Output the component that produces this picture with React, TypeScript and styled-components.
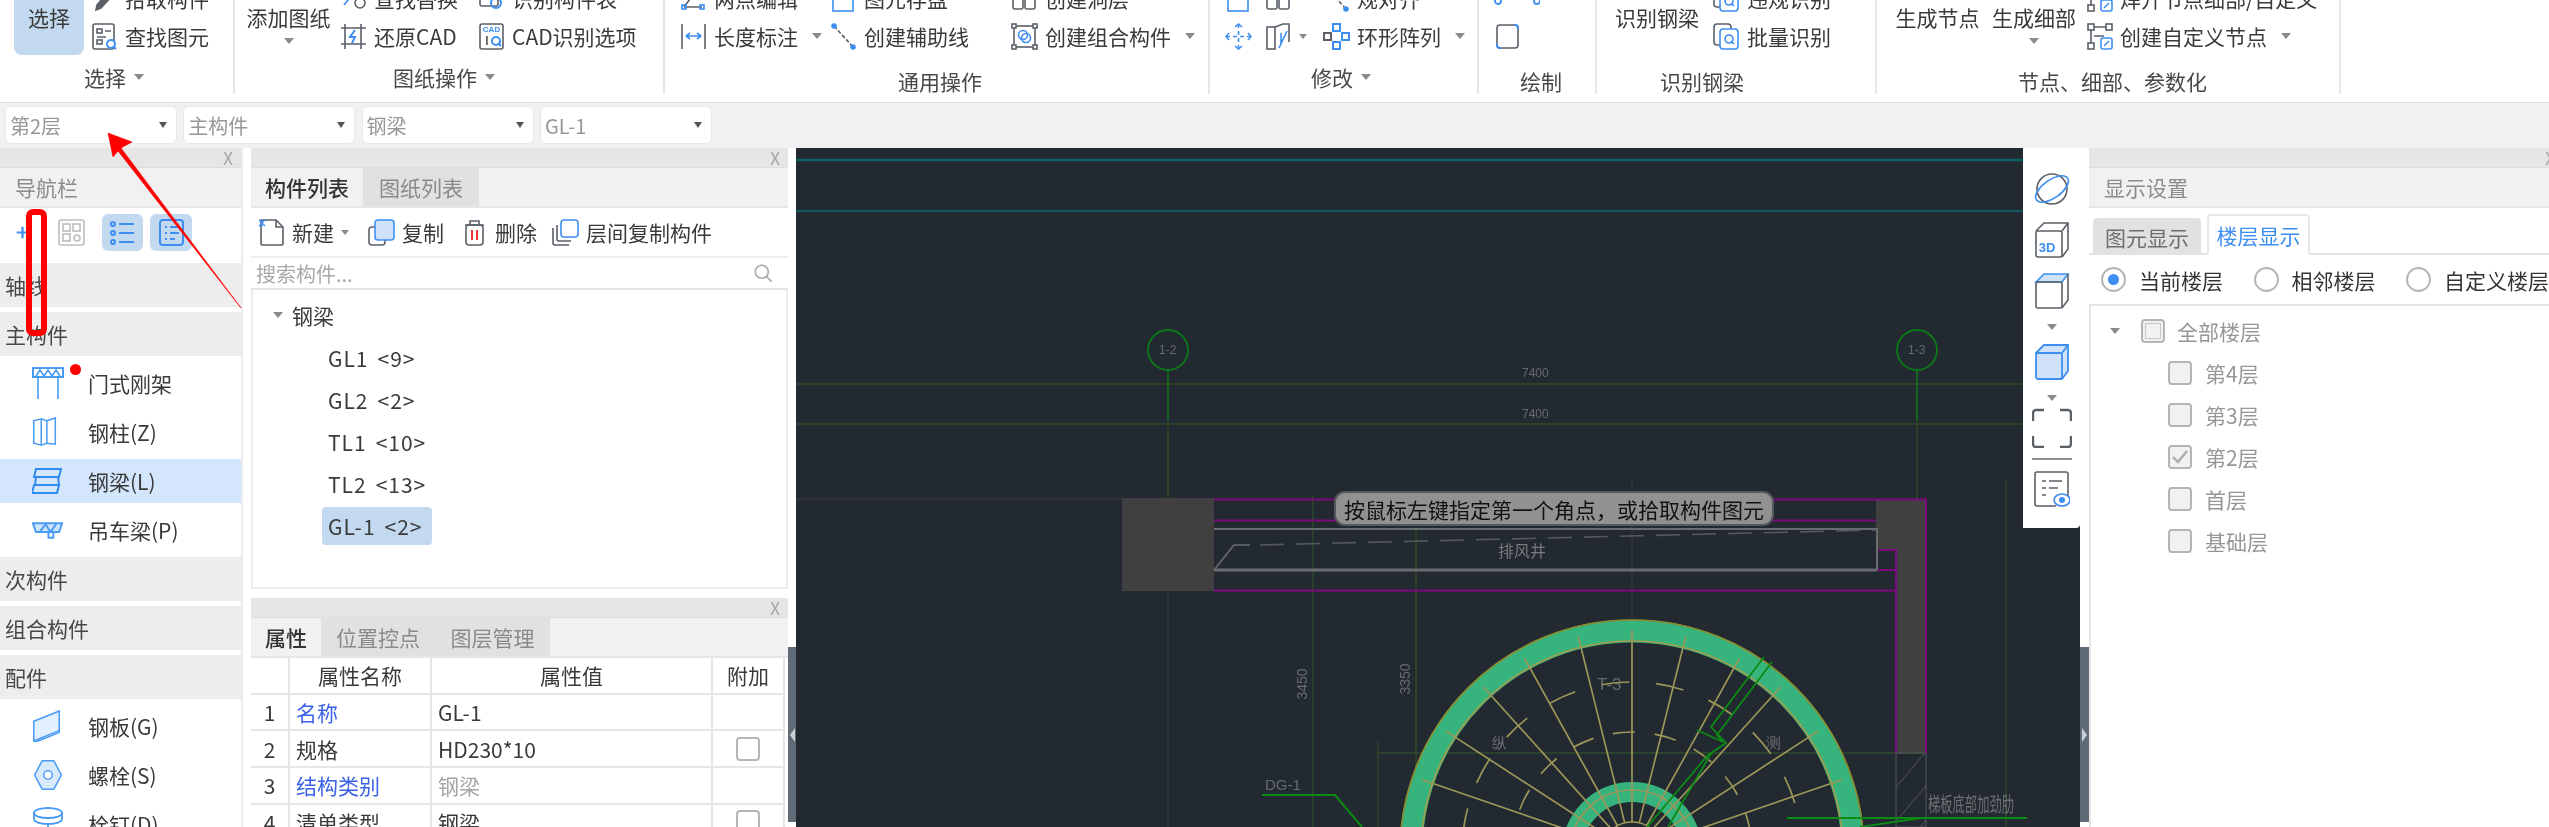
import React from "react";
import styled, { createGlobalStyle } from "styled-components";

const GRAY = "#5b6068";
const BLUE = "#3d8ef0";

const GlobalStyle = createGlobalStyle`
  html, body {
    margin: 0;
    padding: 0;
    background: #fff;
  }
  * {
    box-sizing: border-box;
  }
`;

const Page = styled.div`
  position: relative;
  width: 2549px;
  height: 827px;
  overflow: hidden;
  background: #fff;
  color: #3a3a3a;
  font-family: "Noto Sans CJK SC", "Liberation Sans", sans-serif;
  font-size: 21px;
  display: flex;
  flex-direction: column;
  filter: blur(0.45px);
`;

/* ribbon: the window is scrolled so its first row is cut off at the top */
const Ribbon = styled.div`
  flex: none;
  height: 103px;
  overflow: hidden;
  background: #fff;
  border-bottom: 1px solid #dcdcdc;
`;

const RibbonInner = styled.div`
  display: flex;
  margin-top: -21px;
`;

const Group = styled.div<{ $w: number; $pl: number }>`
  flex: none;
  width: ${(p) => p.$w}px;
  height: 115px;
  padding-left: ${(p) => p.$pl}px;
  border-right: 2px solid #e6e6e6;
  display: flex;
  flex-direction: column;
`;

const GroupBody = styled.div`
  height: 76px;
  display: flex;
`;

const GroupLabel = styled.div<{ $cx: number; $low?: boolean }>`
  margin-top: ${(p) => (p.$low ? 14 : 10)}px;
  height: 24px;
  line-height: 24px;
  font-size: 21px;
  color: #484848;
  white-space: nowrap;
  padding-left: ${(p) => p.$cx}px;
  display: flex;
  align-items: center;
  gap: 8px;
`;

const Caret = styled.span<{ $size?: number }>`
  display: inline-block;
  width: 0;
  height: 0;
  border-left: ${(p) => p.$size ?? 5}px solid transparent;
  border-right: ${(p) => p.$size ?? 5}px solid transparent;
  border-top: ${(p) => (p.$size ?? 5) + 1}px solid #8a8a8a;
`;

const BigButton = styled.div<{ $w: number; $active?: boolean; $mr: number }>`
  flex: none;
  width: ${(p) => p.$w}px;
  margin-right: ${(p) => p.$mr}px;
  padding-top: 26px;
  text-align: center;
  white-space: nowrap;
  line-height: 24px;
  border-radius: 0 0 8px 8px;
  background: ${(p) => (p.$active ? "#c2d9f0" : "transparent")};
  display: flex;
  flex-direction: column;
  align-items: center;
  gap: 9px;
`;

const ToolColumn = styled.div<{ $w: number }>`
  flex: none;
  width: ${(p) => p.$w}px;
  display: flex;
  flex-direction: column;
`;

const Tool = styled.div`
  height: 38px;
  display: flex;
  align-items: center;
  gap: 7px;
  white-space: nowrap;
`;

const ToolCaret = styled(Caret)`
  margin-left: 7px;
`;

const ComboBar = styled.div`
  flex: none;
  height: 45px;
  background: #f1f1f1;
  padding: 3px 0 0 5px;
  display: flex;
  gap: 6.3px;
`;

const Combo = styled.div`
  width: 172px;
  height: 38px;
  background: #fff;
  border-radius: 6px;
  border: 1px solid #e8e8e8;
  color: #979797;
  font-size: 20px;
  padding: 0 9px 0 4px;
  display: flex;
  align-items: center;
  justify-content: space-between;
`;

const ComboCaret = styled(Caret)`
  border-top-color: #555;
  border-left-width: 4px;
  border-right-width: 4px;
`;

const Workspace = styled.div`
  flex: 1;
  min-height: 0;
  display: flex;
`;

const CloseBar = styled.div`
  flex: none;
  height: 20px;
  background: #e6e6e6;
  border-bottom: 1px solid #ddd;
  display: flex;
  align-items: center;
  justify-content: flex-end;
  padding-right: 8px;
  color: #a5a5a5;
  font-size: 17px;
  line-height: 20px;
`;

const TitleBar = styled.div`
  flex: none;
  height: 40px;
  background: #f1f1f1;
  border-bottom: 2px solid #e6e6e6;
  padding-left: 15px;
  display: flex;
  align-items: center;
  color: #8c8c8c;
`;

const NavColumn = styled.aside`
  flex: none;
  width: 243px;
  margin-right: 8px;
  display: flex;
  flex-direction: column;
  border-right: 2px solid #ececec;
`;

const NavToolbar = styled.div`
  flex: none;
  height: 48px;
  padding: 6px 0 0 15px;
  display: flex;
  align-items: flex-start;
`;

const NavToolButton = styled.div<{ $active?: boolean; $w: number; $mr: number }>`
  width: ${(p) => p.$w}px;
  margin-right: ${(p) => p.$mr}px;
  height: 37px;
  border-radius: 6px;
  background: ${(p) => (p.$active ? "#c2d9f0" : "transparent")};
  display: flex;
  align-items: center;
  justify-content: center;
`;

const NavList = styled.div`
  padding-top: 7px;
  display: flex;
  flex-direction: column;
  gap: 5px;
`;

const NavSection = styled.div`
  height: 44px;
  padding-left: 5px;
  background: #ededed;
  display: flex;
  align-items: center;
  color: #484848;
`;

const NavItem = styled.div<{ $active?: boolean }>`
  position: relative;
  height: 44px;
  padding-left: 32px;
  display: flex;
  align-items: center;
  background: ${(p) => (p.$active ? "#d3e6fb" : "transparent")};
`;

const NavIcon = styled.span`
  width: 56px;
  flex: none;
  display: flex;
`;

const RedDot = styled.span`
  position: absolute;
  left: 70px;
  top: 3px;
  width: 11px;
  height: 11px;
  border-radius: 50%;
  background: #f00;
`;

const ListColumn = styled.section`
  flex: none;
  width: 537px;
  display: flex;
  flex-direction: column;
  gap: 9px;
`;

const ListPanel = styled.div`
  flex: none;
  height: 441px;
  display: flex;
  flex-direction: column;
`;

const TabStrip = styled.div`
  flex: none;
  height: 40px;
  background: #f1f1f1;
  border-bottom: 2px solid #e6e6e6;
  display: flex;
`;

const DarkTab = styled.div<{ $w: number; $active?: boolean }>`
  width: ${(p) => p.$w}px;
  display: flex;
  align-items: center;
  justify-content: center;
  background: ${(p) => (p.$active ? "#f1f1f1" : "#e1e1e1")};
  color: ${(p) => (p.$active ? "#333" : "#8a8a8a")};
  font-weight: ${(p) => (p.$active ? 500 : 400)};
`;

const ListToolbar = styled.div`
  flex: none;
  height: 48px;
  padding: 0 0 0 7px;
  display: flex;
  align-items: center;
`;

const ListTool = styled.div<{ $mr: number }>`
  display: flex;
  align-items: center;
  gap: 7px;
  margin-right: ${(p) => p.$mr}px;
  white-space: nowrap;
`;

const SearchRow = styled.div`
  flex: none;
  height: 34px;
  padding: 0 14px 0 5px;
  border-top: 2px solid #ececec;
  border-bottom: 2px solid #e4e4e4;
  display: flex;
  align-items: center;
  justify-content: space-between;
  color: #a8a8a8;
  font-size: 20px;
`;

const TreeBox = styled.div`
  flex: 1;
  padding: 7px 0 0 20px;
  border: 2px solid #ececec;
  border-top: none;
`;

const TreeRoot = styled.div`
  height: 36px;
  display: flex;
  align-items: center;
  gap: 9px;
`;

const TreeRows = styled.div`
  margin-top: 6px;
  display: flex;
  flex-direction: column;
  gap: 4px;
  align-items: flex-start;
`;

const TreeRow = styled.div<{ $active?: boolean }>`
  height: 38px;
  margin-left: 49px;
  padding: 0 6px;
  min-width: 110px;
  display: flex;
  align-items: center;
  gap: 9px;
  border-radius: 4px;
  letter-spacing: 1px;
  background: ${(p) => (p.$active ? "#c2d9f0" : "transparent")};
`;

const PropsPanel = styled.div`
  flex: 1;
  min-height: 0;
  display: flex;
  flex-direction: column;
  overflow: hidden;
`;

const PropGrid = styled.div`
  display: grid;
  grid-template-columns: 39px 142px 281px 72px;
  grid-auto-rows: 36.7px;
  width: 534px;
`;

const Cell = styled.div<{ $head?: boolean; $color?: string }>`
  border-right: 2px solid #e6e6e6;
  border-bottom: 2px solid #e6e6e6;
  display: flex;
  align-items: center;
  justify-content: ${(p) => (p.$head ? "center" : "flex-start")};
  padding-left: ${(p) => (p.$head ? 0 : 6)}px;
  color: ${(p) => p.$color ?? "#3a3a3a"};
  white-space: nowrap;
`;

const NumCell = styled(Cell)`
  justify-content: center;
  padding-left: 0;
`;

const CheckCell = styled(Cell)`
  justify-content: center;
  padding-left: 0;
`;

const Check = styled.span<{ $dim?: boolean }>`
  width: 24px;
  height: 24px;
  flex: none;
  border-radius: 4px;
  border: 2px solid #b5b5b5;
  background: ${(p) => (p.$dim ? "#f1f1f1" : "#fff")};
  display: inline-flex;
  align-items: center;
  justify-content: center;
`;

const Gutter = styled.div<{ $w: number }>`
  flex: none;
  width: ${(p) => p.$w}px;
  background: #fff;
`;

const GutterHandle = styled.div`
  margin-top: 499px;
  height: 175px;
  background: #5f6b76;
  display: flex;
  align-items: center;
  justify-content: center;
`;

const GutterArrow = styled.span<{ $dir: "left" | "right" }>`
  width: 0;
  height: 0;
  border-top: 7px solid transparent;
  border-bottom: 7px solid transparent;
  ${(p) => (p.$dir === "left" ? "border-right: 5px solid #c9d0d6;" : "border-left: 5px solid #c9d0d6;")}
`;

const Canvas = styled.main`
  position: relative;
  flex: none;
  width: 1284px;
  background: #222930;
  overflow: hidden;
`;

const CanvasDrawing = styled.svg`
  display: block;
  width: 1284px;
  height: 679px;
  font-family: "Liberation Sans", sans-serif;
`;

const Hint = styled.div`
  position: absolute;
  left: 538px;
  top: 343px;
  width: 440px;
  height: 35px;
  background: #919191;
  border: 2px solid #55595e;
  border-radius: 11px;
  color: #111;
  display: flex;
  align-items: center;
  justify-content: center;
  white-space: nowrap;
`;

const ViewTools = styled.div`
  position: absolute;
  right: 0;
  top: 0;
  width: 57px;
  height: 380px;
  background: #fff;
  border-radius: 0 0 4px 0;
  display: flex;
  flex-direction: column;
  align-items: center;
`;

const SettingsPanel = styled.aside`
  flex: 1;
  min-width: 0;
  display: flex;
  flex-direction: column;
  overflow: hidden;
`;

const SettingsClose = styled(CloseBar)`
  padding-right: 0;
  margin-right: -6px;
`;

const SettingsTabs = styled.div`
  flex: none;
  height: 47px;
  padding-left: 4px;
  border-bottom: 2px solid #e4e4e4;
  display: flex;
  align-items: flex-end;
  gap: 6px;
`;

const SettingsTab = styled.div<{ $active?: boolean }>`
  height: ${(p) => (p.$active ? 41 : 37)}px;
  width: ${(p) => (p.$active ? 103 : 108)}px;
  margin-bottom: -2px;
  border-radius: 4px 4px 0 0;
  display: flex;
  align-items: center;
  justify-content: center;
  background: ${(p) => (p.$active ? "#fff" : "#e1e1e1")};
  color: ${(p) => (p.$active ? "#3d8ef0" : "#6e6e6e")};
  border: ${(p) => (p.$active ? "2px solid #e8e8e8" : "none")};
  border-bottom: ${(p) => (p.$active ? "2px solid #fff" : "none")};
  position: relative;
`;

const RadioRow = styled.div`
  flex: none;
  height: 51px;
  padding-left: 12px;
  border-bottom: 2px solid #e4e4e4;
  display: flex;
  align-items: center;
`;

const RadioOption = styled.div`
  width: 152.5px;
  flex: none;
  display: flex;
  align-items: center;
  gap: 13px;
  white-space: nowrap;
  color: #333;
`;

const Radio = styled.span<{ $on?: boolean }>`
  width: 25px;
  height: 25px;
  flex: none;
  border-radius: 50%;
  border: 2px solid #b5b5b5;
  display: flex;
  align-items: center;
  justify-content: center;
  &::after {
    content: "";
    width: 11px;
    height: 11px;
    border-radius: 50%;
    background: ${(p) => (p.$on ? "#3d8ef0" : "transparent")};
  }
`;

const FloorTree = styled.div`
  flex: 1;
  padding: 4px 0 0 19px;
  border-left: 2px solid #e4e4e4;
  color: #969696;
`;

const FloorRow = styled.div<{ $indent?: boolean }>`
  height: 42px;
  display: flex;
  align-items: center;
  padding-left: ${(p) => (p.$indent ? 58 : 0)}px;
  gap: ${(p) => (p.$indent ? 13 : 12)}px;
`;

const FloorCheckAll = styled(Check)`
  margin-left: 9px;
  &::after {
    content: "";
    width: 14px;
    height: 14px;
    border: 1px solid #c8c8c8;
  }
`;

const Annotation = styled.svg`
  position: absolute;
  left: 0;
  top: 0;
  width: 2549px;
  height: 827px;
  pointer-events: none;
`;

/* ---------- icons ---------- */

const Ico: React.FC<{ s?: number; h?: number; children: React.ReactNode }> = ({ s = 27, h, children }) => (
  <svg width={s} height={h ?? s} viewBox="0 0 27 27" fill="none" strokeWidth={1.6} stroke={GRAY} style={{ flex: "none" }}>
    {children}
  </svg>
);

const PickIcon = () => (
  <Ico>
    <path d="M6 20 L16 8 L20 12 L10 23 L5 25 Z" stroke={GRAY} fill={GRAY} />
  </Ico>
);
const FindIcon = () => (
  <Ico>
    <rect x="2" y="1" width="21" height="25" rx="2" />
    <rect x="6" y="6" width="5" height="4" />
    <path d="M14 8h6M6 14h9" />
    <rect x="6" y="17" width="5" height="4" />
    <circle cx="20" cy="21" r="4" stroke={BLUE} strokeWidth={2} fill="#fff" />
    <path d="M22 23l3 3" stroke={BLUE} strokeWidth={2} />
  </Ico>
);
const SwapIcon = () => (
  <Ico>
    <path d="M4 20 L12 10" stroke={BLUE} />
    <circle cx="20" cy="18" r="5" />
  </Ico>
);
const RestoreIcon = () => (
  <Ico>
    <path d="M5 1v25M21 1v25M1 5h25M1 21h25" />
    <path d="M15 7 L10 14 H15 L12 20" stroke={BLUE} strokeWidth={2} />
  </Ico>
);
const CadIcon = () => (
  <Ico>
    <rect x="2" y="1" width="23" height="25" rx="2" />
    <text x="13.5" y="9" fontSize="8" fontWeight="700" fill={BLUE} stroke="none" textAnchor="middle" fontFamily="Liberation Sans">CAD</text>
    <text x="9" y="22" fontSize="12" fontWeight="700" fill={GRAY} stroke="none" textAnchor="middle" fontFamily="Liberation Sans">I</text>
    <circle cx="18" cy="18" r="4" stroke={BLUE} strokeWidth={2} />
    <path d="M20 20l3 3" stroke={BLUE} strokeWidth={2} />
  </Ico>
);
const TableIcon = () => (
  <Ico>
    <rect x="2" y="1" width="18" height="20" rx="2" />
    <circle cx="18" cy="18" r="5" stroke={BLUE} strokeWidth={2} />
  </Ico>
);
const TwoPointIcon = () => (
  <Ico>
    <path d="M4 22 L22 22 M4 22 L10 14" />
    <rect x="2" y="20" width="4" height="4" stroke={BLUE} />
    <rect x="20" y="20" width="4" height="4" stroke={BLUE} />
  </Ico>
);
const DimIcon = () => (
  <Ico>
    <path d="M2 1v25M25 1v25" />
    <path d="M6 13h15M6 13l4-3M6 13l4 3M21 13l-4-3M21 13l-4 3" stroke={BLUE} />
  </Ico>
);
const AuxLineIcon = () => (
  <Ico>
    <path d="M4 3 L23 24" strokeDasharray="4 2" />
    <circle cx="4" cy="3" r="2" fill={BLUE} stroke={BLUE} />
    <circle cx="23" cy="24" r="2" fill={BLUE} stroke={BLUE} />
  </Ico>
);
const SaveIcon = () => (
  <Ico>
    <rect x="3" y="6" width="20" height="20" stroke={BLUE} />
  </Ico>
);
const HoleIcon = () => (
  <Ico>
    <rect x="2" y="10" width="10" height="14" rx="2" />
    <rect x="14" y="10" width="10" height="14" rx="2" />
  </Ico>
);
const ComboIcon = () => (
  <Ico>
    <rect x="3" y="3" width="21" height="21" />
    <rect x="1" y="1" width="4" height="4" fill="#fff" />
    <rect x="22" y="1" width="4" height="4" fill="#fff" />
    <rect x="1" y="22" width="4" height="4" fill="#fff" />
    <rect x="22" y="22" width="4" height="4" fill="#fff" />
    <circle cx="12" cy="12" r="4.5" stroke={BLUE} />
    <circle cx="15" cy="15" r="4.5" stroke={BLUE} />
  </Ico>
);
const MoveIcon = () => (
  <Ico>
    <g stroke={BLUE}>
      <path d="M13.5 1v25M1 13.5h25" strokeDasharray="4 3" />
      <path d="M10 4l3.5-3 3.5 3M10 23l3.5 3 3.5-3M4 10l-3 3.5 3 3.5M23 10l3 3.5-3 3.5" />
    </g>
  </Ico>
);
const MirrorIcon = () => (
  <Ico>
    <rect x="2" y="4" width="8" height="22" />
    <path d="M10 4l8-3h6v18" />
    <path d="M16 10v12M22 8 L14 25" stroke={BLUE} />
  </Ico>
);
const ArrayIcon = () => (
  <Ico>
    <g stroke={BLUE} strokeWidth={2}>
      <rect x="10" y="1" width="7" height="7" />
      <rect x="1" y="10" width="7" height="7" stroke={GRAY} />
      <rect x="19" y="10" width="7" height="7" />
      <rect x="10" y="19" width="7" height="7" />
    </g>
  </Ico>
);
const DrawIcon = () => (
  <Ico>
    <rect x="3" y="2" width="21" height="23" rx="3" />
    <path d="M3 21v1a3 3 0 0 0 3 3h1M20 2h1a3 3 0 0 1 3 3v1" stroke={BLUE} strokeWidth={2} />
  </Ico>
);
const ArcNodesIcon = () => (
  <svg width="46" height="27" viewBox="0 0 46 27" fill="none" strokeWidth={1.8} stroke={BLUE} style={{ flex: "none" }}>
    <path d="M8 0 L4 12M43 0v12" stroke={GRAY} />
    <circle cx="4" cy="16" r="3" />
    <circle cx="43" cy="16" r="3" />
  </svg>
);
const BatchIcon = () => (
  <Ico>
    <rect x="1" y="1" width="17" height="21" rx="3" />
    <rect x="7" y="6" width="18" height="20" rx="3" stroke={BLUE} fill="#fff" />
    <circle cx="16" cy="16" r="4" stroke={BLUE} />
    <path d="M18 18l3 3" stroke={BLUE} />
  </Ico>
);
const CustomNodeIcon = () => (
  <Ico>
    <rect x="2" y="1" width="6" height="6" />
    <rect x="20" y="1" width="6" height="6" />
    <rect x="2" y="20" width="6" height="6" />
    <path d="M8 4h12M5 7v13M8 13h10" />
    <rect x="15" y="15" width="11" height="11" rx="2" stroke={BLUE} />
    <path d="M18 23 L23 18" stroke={BLUE} />
  </Ico>
);

const PlusIcon = () => (
  <Ico s={15}>
    <path d="M13.5 3v21M3 13.5h21" stroke={BLUE} strokeWidth={4} />
  </Ico>
);
const GridIcon = () => (
  <Ico>
    <g stroke="#bdbdbd">
      <rect x="1" y="1" width="25" height="25" rx="2" />
      <rect x="5" y="5" width="7" height="7" />
      <rect x="15" y="5" width="7" height="7" />
      <rect x="5" y="15" width="7" height="7" />
      <circle cx="19" cy="19" r="3" />
    </g>
  </Ico>
);
const BulletsIcon = () => (
  <Ico>
    <g stroke={BLUE} strokeWidth={2}>
      <circle cx="4" cy="5" r="2" />
      <circle cx="4" cy="14" r="2" />
      <circle cx="4" cy="23" r="2" />
      <path d="M10 5h15M10 14h15M10 23h15" />
    </g>
  </Ico>
);
const DetailIcon = () => (
  <Ico>
    <rect x="2" y="1" width="23" height="25" rx="3" stroke={BLUE} strokeWidth={2} />
    <path d="M7 8h2M12 8h9M7 14h2M12 14h9M7 20h2M12 20h5" stroke={BLUE} strokeWidth={2} />
  </Ico>
);

const NewIcon = () => (
  <Ico>
    <path d="M3 1h15l7 7v17a1 1 0 0 1-1 1H4a1 1 0 0 1-1-1z" fill="#fff" />
    <path d="M18 1v7h7" />
    <path d="M1 1l6 6M7 1l-6 6M4 0v8" stroke={BLUE} strokeWidth={1.2} />
  </Ico>
);
const CopyIcon = () => (
  <Ico>
    <rect x="1" y="8" width="16" height="18" rx="3" />
    <rect x="7" y="1" width="19" height="20" rx="3" stroke={BLUE} fill="#cfe2f8" />
  </Ico>
);
const TrashIcon = () => (
  <Ico>
    <path d="M4 6h19M9 6V2h9v4" />
    <rect x="5" y="6" width="17" height="20" rx="3" />
    <path d="M11 11v10M16 11v10" stroke="#e33" strokeWidth={2} />
  </Ico>
);
const FloorCopyIcon = () => (
  <Ico>
    <path d="M1 9v15a2 2 0 0 0 2 2h14" />
    <path d="M5 6v14a2 2 0 0 0 2 2h12" />
    <rect x="9" y="1" width="17" height="17" rx="3" stroke={BLUE} fill="#fff" />
  </Ico>
);
const SearchIcon = () => (
  <Ico s={22}>
    <circle cx="12" cy="12" r="8" stroke="#aaa" strokeWidth={2} />
    <path d="M18 18l6 6" stroke="#aaa" strokeWidth={2} />
  </Ico>
);

const L = "#4a9bf5";
const FrameIcon = () => (
  <svg width="32" height="32" viewBox="0 0 32 32" fill="none" stroke={L} strokeWidth="1.6">
    <rect x="1" y="1" width="30" height="9" strokeWidth="2" />
    <path d="M4 9 L8 3 L12 9 L16 3 L20 9 L24 3 L28 9" />
    <path d="M6 10v22M26 10v22" />
  </svg>
);
const ColumnIcon = () => (
  <svg width="26" height="30" viewBox="0 0 26 32" fill="none" stroke={L} strokeWidth="1.6">
    <path d="M1 4l8-2v28l-8-2zM9 2l6 2v24l-6 2M15 4l9-3v28l-9-1" />
  </svg>
);
const BeamIcon = () => (
  <svg width="30" height="26" viewBox="0 0 30 26" fill="none" stroke="#2f8af0" strokeWidth="2">
    <path d="M4 1h25l-2 8H2zM4 9l-1 8M26 9l1 8M2 17h25l-2 8H0z" />
  </svg>
);
const CraneIcon = () => (
  <svg width="31" height="18" viewBox="0 0 32 18" fill="none" stroke={L} strokeWidth="2">
    <path d="M1 2h30l-3 9H4z" fill="#cfe4fb" />
    <path d="M8 11l6-8 5 8 6-8" />
    <path d="M17 11v6h5v-6" />
  </svg>
);
const PlateIcon = () => (
  <svg width="30" height="32" viewBox="0 0 30 34" fill="none" stroke={L} strokeWidth="1.6">
    <path d="M1 12 L28 1v21L1 33z" fill="#e3f0fe" />
    <path d="M1 33l2 1 25-10v-2" />
  </svg>
);
const BoltIcon = () => (
  <svg width="32" height="30" viewBox="0 0 34 36" fill="none" stroke={L} strokeWidth="1.8">
    <path d="M10 1h14l9 17-9 17H10L1 18z" fill="#d8e9fc" />
    <circle cx="17" cy="18" r="5" fill="#fff" />
  </svg>
);
const StudIcon = () => (
  <svg width="32" height="34" viewBox="0 0 32 34" fill="none" stroke={L} strokeWidth="1.8">
    <ellipse cx="16" cy="6" rx="14" ry="5" />
    <path d="M2 6v6c0 3 6 5 14 5s14-2 14-5V6M16 17v17" />
  </svg>
);

const OrbitIcon = () => (
  <svg width="38" height="38" viewBox="0 0 38 38" fill="none">
    <circle cx="19" cy="19" r="15" stroke={GRAY} strokeWidth="1.6" />
    <ellipse cx="19" cy="19" rx="19" ry="9" transform="rotate(-35 19 19)" stroke={BLUE} strokeWidth="1.6" />
  </svg>
);
const Cube3dIcon = () => (
  <svg width="36" height="38" viewBox="0 0 36 38" fill="none" stroke={GRAY} strokeWidth="1.6">
    <rect x="2" y="10" width="26" height="26" rx="2" />
    <path d="M2 10l8-8h24v26l-6 8M28 10l6-8" />
    <text x="13" y="31" fontSize="13" fontWeight="700" fill={BLUE} stroke="none" textAnchor="middle" fontFamily="Liberation Sans">3D</text>
  </svg>
);
const CubeTopIcon = () => (
  <svg width="36" height="38" viewBox="0 0 36 38" fill="none" stroke={GRAY} strokeWidth="1.6">
    <path d="M2 10l8-8h24l-6 8z" fill="#cfe2f8" stroke={BLUE} />
    <rect x="2" y="10" width="26" height="26" rx="2" />
    <path d="M28 36l6-8V2" />
  </svg>
);
const CubeBlueIcon = () => (
  <svg width="36" height="38" viewBox="0 0 36 38" fill="#cfe2f8" stroke={BLUE} strokeWidth="1.8">
    <path d="M2 10l8-8h24v26l-6 8z" />
    <rect x="2" y="10" width="26" height="26" rx="2" />
    <path d="M28 10l6-8" />
  </svg>
);
const CornersIcon = () => (
  <svg width="40" height="40" viewBox="0 0 40 40" fill="none" stroke={GRAY} strokeWidth="2.4">
    <path d="M1 13V5a3 3 0 0 1 3-3h8M28 2h8a3 3 0 0 1 3 3v8M39 28v8a3 3 0 0 1-3 3h-8M12 39H4a3 3 0 0 1-3-3v-8" />
  </svg>
);
const ListEyeIcon = () => (
  <svg width="36" height="38" viewBox="0 0 36 38" fill="none" stroke={GRAY} strokeWidth="1.6">
    <path d="M22 36H3a2 2 0 0 1-2-2V4a2 2 0 0 1 2-2h29a2 2 0 0 1 2 2v22" />
    <path d="M8 11h4M15 11h13M8 18h4M15 18h9M8 25h4" />
    <ellipse cx="28" cy="30" rx="8" ry="6" stroke={BLUE} fill="#fff" />
    <circle cx="28" cy="30" r="3" fill={BLUE} stroke="none" />
  </svg>
);

const ToolIcon = styled.div<{ $mt: number }>`
  margin-top: ${(p) => p.$mt}px;
  display: flex;
  line-height: 0;
`;

const ToolDivider = styled.div`
  width: 40px;
  height: 2px;
  margin-top: 10px;
  background: #8a8f96;
`;

/* ---------- drawing in the canvas ---------- */

const CX = 1632;
const CY = 852;
const spokes = [-86, -71, -57, -42, -29, -14, 0, 14, 29, 42, 57, 71, 86];

const Drawing = () => (
  <CanvasDrawing viewBox="796 148 1284 679">
    <defs>
      <pattern id="hatch" width="22" height="22" patternUnits="userSpaceOnUse" patternTransform="rotate(-50)">
        <path d="M0 0H22" stroke="#55585c" strokeWidth="1.5" />
      </pattern>
    </defs>

    <path d="M796 160H2080" stroke="#0c6163" strokeWidth="2.4" />
    <path d="M796 211H2080" stroke="#0f5a60" strokeWidth="2" />

    <g fill="none" stroke="#2f4a2a" strokeWidth="1.4">
      <path d="M796 384H2080M796 424H2080" />
      <path d="M1313 495V827M1416 527V827M2006 480V827M1378 742V827M1378 753H1926" />
      <path d="M1168 420V500M1917 370V500" />
    </g>
    <path d="M1168 370V420M1917 370V420" stroke="#0b7a16" strokeWidth="1.4" />
    <path d="M796 499H1122M1168 591V827M1632 480V620" stroke="#3a3a3a" strokeWidth="1" />
    <ellipse cx="1168" cy="350" rx="20" ry="20" fill="none" stroke="#0b7a16" strokeWidth="1.8" />
    <ellipse cx="1917" cy="350" rx="20" ry="20" fill="none" stroke="#0b7a16" strokeWidth="1.8" />
    <g fill="#666b70" fontSize="12">
      <text x="1159" y="354">1-2</text>
      <text x="1908" y="354">1-3</text>
      <text x="1522" y="377">7400</text>
      <text x="1522" y="418">7400</text>
      <text x="1265" y="790" fontSize="15">DG-1</text>
      <text fontSize="14" textAnchor="middle" transform="translate(1307 684) rotate(-90)">3450</text>
      <text fontSize="14" textAnchor="middle" transform="translate(1410 679) rotate(-90)">3350</text>
      <text x="1597" y="690" fontSize="17">T-3</text>
    </g>

    <rect x="1122" y="498" width="92" height="93" fill="#404040" />
    <path d="M1876 499H1926V753H1896V550H1876Z" fill="#404040" />
    <rect x="1896" y="753" width="30" height="74" fill="url(#hatch)" stroke="#55585c" />

    <g fill="none" stroke="#7d0a7d" strokeWidth="2">
      <path d="M1214 499.5H1340M1770 499.5H1926V753" />
      <path d="M1214 520.5H1340M1770 520.5H1876" />
      <path d="M1214 590.5H1896V550H1876M1896 753V590" />
      <path d="M1877 570H1896" />
    </g>
    <g fill="none" stroke="#6a6d70">
      <path d="M1214 529H1877V570" strokeWidth="2" />
      <path d="M1214 570H1877" strokeWidth="3" />
      <path d="M1214 570L1234 545H1250" strokeWidth="1.6" />
      <path d="M1260 545L1877 530" stroke="#55585c" strokeWidth="1.6" strokeDasharray="24 12" />
    </g>
    <text x="1498" y="557" fontSize="16" fill="#77797c" fontFamily="Noto Sans CJK SC">排风井</text>

    <circle cx={CX} cy={CY} r="221" fill="none" stroke="#37b47e" strokeWidth="23" />
    <circle cx={CX} cy={CY} r="60" fill="none" stroke="#37b47e" strokeWidth="20" />
    <circle cx={CX} cy={CY} r="232" fill="none" stroke="#8f8a2c" strokeWidth="1.6" />
    <circle cx={CX} cy={CY} r="211" fill="none" stroke="#a39c4e" strokeWidth="1.6" />
    <g stroke="#9c9758" strokeWidth="1.7" fill="none">
      {spokes.map((a) => {
        const r = (a * Math.PI) / 180;
        return <line key={a} x1={CX + 30 * Math.sin(r)} y1={CY - 30 * Math.cos(r)} x2={CX + 222 * Math.sin(r)} y2={CY - 222 * Math.cos(r)} />;
      })}
      <circle cx={CX} cy={CY} r="170" strokeDasharray="28 27" />
      <circle cx={CX} cy={CY} r="120" strokeDasharray="22 20" />
      <circle cx={CX} cy={CY} r="62" />
      <circle cx={CX} cy={CY} r="30" />
    </g>
    <g fill="#6a6d70" fontSize="15">
      <text x="1492" y="748">纵</text>
      <text x="1766" y="748">测</text>
    </g>

    <g fill="none" stroke="#0b8a14" strokeWidth="1.8">
      <path d="M1764 657L1711 727L1726 743L1708 755L1647 827" />
      <path d="M1772 662L1717 735L1723 742L1697 730" />
      <path d="M1712 752L1668 827" />
      <path d="M1787 818H2027M1860 827L1921 818" />
      <path d="M1262 795H1335L1362 827" strokeWidth="2" />
    </g>
    <text x="1928" y="812" fontSize="20" fill="#6f7275" fontFamily="Noto Sans CJK SC" textLength="86" lengthAdjust="spacingAndGlyphs">梯板底部加劲肋</text>
  </CanvasDrawing>
);

const floors = [
  { name: "第4层" },
  { name: "第3层" },
  { name: "第2层", checked: true },
  { name: "首层" },
  { name: "基础层" },
];

const props = [
  { name: "名称", value: "GL-1", link: true },
  { name: "规格", value: "HD230*10", check: true },
  { name: "结构类别", value: "钢梁", link: true, dim: true },
  { name: "清单类型", value: "钢梁", check: true },
];

const beams = ["GL1|<9>", "GL2|<2>", "TL1|<10>", "TL2|<13>", "GL-1|<2>"];

const App: React.FC = () => (
  <Page>
    <GlobalStyle />
    <Ribbon>
      <RibbonInner>
        <Group $w={235} $pl={14}>
          <GroupBody>
            <BigButton $w={70} $mr={7} $active>选择</BigButton>
            <ToolColumn $w={130}>
              <Tool><PickIcon />拾取构件</Tool>
              <Tool><FindIcon />查找图元</Tool>
            </ToolColumn>
          </GroupBody>
          <GroupLabel $cx={70}>选择<Caret /></GroupLabel>
        </Group>
        <Group $w={430} $pl={11}>
          <GroupBody>
            <BigButton $w={85} $mr={9}>添加图纸<Caret /></BigButton>
            <ToolColumn $w={138}>
              <Tool><SwapIcon />查找替换</Tool>
              <Tool><RestoreIcon />还原CAD</Tool>
            </ToolColumn>
            <ToolColumn $w={170}>
              <Tool><TableIcon />识别构件表</Tool>
              <Tool><CadIcon />CAD识别选项</Tool>
            </ToolColumn>
          </GroupBody>
          <GroupLabel $cx={147}>图纸操作<Caret /></GroupLabel>
        </Group>
        <Group $w={545} $pl={15}>
          <GroupBody>
            <ToolColumn $w={150}>
              <Tool><TwoPointIcon />两点编辑</Tool>
              <Tool><DimIcon />长度标注<ToolCaret /></Tool>
            </ToolColumn>
            <ToolColumn $w={181}>
              <Tool><SaveIcon />图元存盘</Tool>
              <Tool><AuxLineIcon />创建辅助线</Tool>
            </ToolColumn>
            <ToolColumn $w={190}>
              <Tool><HoleIcon />创建洞层</Tool>
              <Tool><ComboIcon />创建组合构件<ToolCaret /></Tool>
            </ToolColumn>
          </GroupBody>
          <GroupLabel $cx={218} $low>通用操作</GroupLabel>
        </Group>
        <Group $w={269} $pl={15}>
          <GroupBody>
            <ToolColumn $w={40}>
              <Tool><SaveIcon /></Tool>
              <Tool><MoveIcon /></Tool>
            </ToolColumn>
            <ToolColumn $w={58}>
              <Tool><HoleIcon /></Tool>
              <Tool><MirrorIcon /><Caret $size={4} /></Tool>
            </ToolColumn>
            <ToolColumn $w={140}>
              <Tool><AuxLineIcon />规对齐</Tool>
              <Tool><ArrayIcon />环形阵列<ToolCaret /></Tool>
            </ToolColumn>
          </GroupBody>
          <GroupLabel $cx={86}>修改<Caret /></GroupLabel>
        </Group>
        <Group $w={118} $pl={15}>
          <GroupBody>
            <ToolColumn $w={90}>
              <Tool><ArcNodesIcon /></Tool>
              <Tool><DrawIcon /></Tool>
            </ToolColumn>
          </GroupBody>
          <GroupLabel $cx={26} $low>绘制</GroupLabel>
        </Group>
        <Group $w={280} $pl={17}>
          <GroupBody>
            <BigButton $w={86} $mr={13}>识别钢梁</BigButton>
            <ToolColumn $w={130}>
              <Tool><BatchIcon />违规识别</Tool>
              <Tool><BatchIcon />批量识别</Tool>
            </ToolColumn>
          </GroupBody>
          <GroupLabel $cx={46} $low>识别钢梁</GroupLabel>
        </Group>
        <Group $w={464} $pl={18}>
          <GroupBody>
            <BigButton $w={85} $mr={12}>生成节点</BigButton>
            <BigButton $w={84} $mr={10}>生成细部<Caret /></BigButton>
            <ToolColumn $w={240}>
              <Tool><CustomNodeIcon />焊开节点细部/自定义</Tool>
              <Tool><CustomNodeIcon />创建自定义节点<ToolCaret /></Tool>
            </ToolColumn>
          </GroupBody>
          <GroupLabel $cx={123} $low>节点、细部、参数化</GroupLabel>
        </Group>
      </RibbonInner>
    </Ribbon>

    <ComboBar>
      <Combo>第2层<ComboCaret /></Combo>
      <Combo>主构件<ComboCaret /></Combo>
      <Combo>钢梁<ComboCaret /></Combo>
      <Combo>GL-1<ComboCaret /></Combo>
    </ComboBar>

    <Workspace>
      <NavColumn>
        <CloseBar>X</CloseBar>
        <TitleBar>导航栏</TitleBar>
        <NavToolbar>
          <NavToolButton $w={14} $mr={29}><PlusIcon /></NavToolButton>
          <NavToolButton $w={27} $mr={17}><GridIcon /></NavToolButton>
          <NavToolButton $w={41} $mr={7} $active><BulletsIcon /></NavToolButton>
          <NavToolButton $w={42} $mr={0} $active><DetailIcon /></NavToolButton>
        </NavToolbar>
        <NavList>
          <NavSection>轴线</NavSection>
          <NavSection>主构件</NavSection>
          <NavItem><NavIcon><FrameIcon /></NavIcon><RedDot />门式刚架</NavItem>
          <NavItem><NavIcon><ColumnIcon /></NavIcon>钢柱(Z)</NavItem>
          <NavItem $active><NavIcon><BeamIcon /></NavIcon>钢梁(L)</NavItem>
          <NavItem><NavIcon><CraneIcon /></NavIcon>吊车梁(P)</NavItem>
          <NavSection>次构件</NavSection>
          <NavSection>组合构件</NavSection>
          <NavSection>配件</NavSection>
          <NavItem><NavIcon><PlateIcon /></NavIcon>钢板(G)</NavItem>
          <NavItem><NavIcon><BoltIcon /></NavIcon>螺栓(S)</NavItem>
          <NavItem><NavIcon><StudIcon /></NavIcon>栓钉(D)</NavItem>
        </NavList>
      </NavColumn>

      <ListColumn>
        <ListPanel>
          <CloseBar>X</CloseBar>
          <TabStrip>
            <DarkTab $w={112} $active>构件列表</DarkTab>
            <DarkTab $w={116}>图纸列表</DarkTab>
          </TabStrip>
          <ListToolbar>
            <ListTool $mr={19}><NewIcon />新建<Caret $size={4} /></ListTool>
            <ListTool $mr={17}><CopyIcon />复制</ListTool>
            <ListTool $mr={15}><TrashIcon />删除</ListTool>
            <ListTool $mr={0}><FloorCopyIcon />层间复制构件</ListTool>
          </ListToolbar>
          <SearchRow>搜索构件...<SearchIcon /></SearchRow>
          <TreeBox>
            <TreeRoot><Caret />钢梁</TreeRoot>
            <TreeRows>
              {beams.map((b, i) => {
                const [code, count] = b.split("|");
                return (
                  <TreeRow key={b} $active={i === 4}>
                    <span>{code}</span>
                    <span>{count}</span>
                  </TreeRow>
                );
              })}
            </TreeRows>
          </TreeBox>
        </ListPanel>
        <PropsPanel>
          <CloseBar>X</CloseBar>
          <TabStrip>
            <DarkTab $w={70} $active>属性</DarkTab>
            <DarkTab $w={114}>位置控点</DarkTab>
            <DarkTab $w={115}>图层管理</DarkTab>
          </TabStrip>
          <PropGrid>
            <Cell $head />
            <Cell $head>属性名称</Cell>
            <Cell $head>属性值</Cell>
            <Cell $head>附加</Cell>
            {props.map((p, i) => (
              <React.Fragment key={p.name}>
                <NumCell>{i + 1}</NumCell>
                <Cell $color={p.link ? "#3a62e8" : undefined}>{p.name}</Cell>
                <Cell $color={p.dim ? "#a5a5a5" : undefined}>{p.value}</Cell>
                <CheckCell>{p.check ? <Check /> : null}</CheckCell>
              </React.Fragment>
            ))}
          </PropGrid>
        </PropsPanel>
      </ListColumn>

      <Gutter $w={8}>
        <GutterHandle><GutterArrow $dir="left" /></GutterHandle>
      </Gutter>

      <Canvas>
        <Drawing />
        <Hint>按鼠标左键指定第一个角点，或拾取构件图元</Hint>
        <ViewTools>
          <ToolIcon $mt={22}><OrbitIcon /></ToolIcon>
          <ToolIcon $mt={13}><Cube3dIcon /></ToolIcon>
          <ToolIcon $mt={13}><CubeTopIcon /></ToolIcon>
          <ToolIcon $mt={14}><Caret $size={5} /></ToolIcon>
          <ToolIcon $mt={13}><CubeBlueIcon /></ToolIcon>
          <ToolIcon $mt={14}><Caret $size={5} /></ToolIcon>
          <ToolIcon $mt={7}><CornersIcon /></ToolIcon>
          <ToolDivider />
          <ToolIcon $mt={10}><ListEyeIcon /></ToolIcon>
        </ViewTools>
      </Canvas>

      <Gutter $w={9}>
        <GutterHandle><GutterArrow $dir="right" /></GutterHandle>
      </Gutter>

      <SettingsPanel>
        <SettingsClose>X</SettingsClose>
        <TitleBar>显示设置</TitleBar>
        <SettingsTabs>
          <SettingsTab>图元显示</SettingsTab>
          <SettingsTab $active>楼层显示</SettingsTab>
        </SettingsTabs>
        <RadioRow>
          <RadioOption><Radio $on />当前楼层</RadioOption>
          <RadioOption><Radio />相邻楼层</RadioOption>
          <RadioOption><Radio />自定义楼层</RadioOption>
        </RadioRow>
        <FloorTree>
          <FloorRow><Caret /><FloorCheckAll $dim />全部楼层</FloorRow>
          {floors.map((f) => (
            <FloorRow key={f.name} $indent>
              <Check $dim>
                {f.checked ? (
                  <svg width="16" height="14" viewBox="0 0 16 14" fill="none" stroke="#aaa" strokeWidth="2.4">
                    <path d="M1 7l5 5L15 1" />
                  </svg>
                ) : null}
              </Check>
              {f.name}
            </FloorRow>
          ))}
        </FloorTree>
      </SettingsPanel>
    </Workspace>

    <Annotation viewBox="0 0 2549 827">
      <rect x="29" y="212" width="15" height="121" rx="4" fill="none" stroke="#f00" strokeWidth="6" />
      <path d="M108 133L132 142L121 148L241 308L118 151L113 157Z" fill="#f00" stroke="#f00" strokeWidth="0.6" strokeLinejoin="round" />
    </Annotation>
  </Page>
);

export default App;
